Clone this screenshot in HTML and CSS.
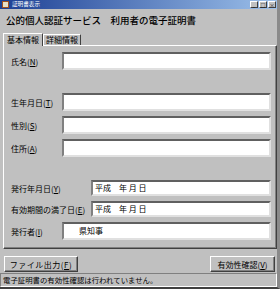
FILE: index.html
```html
<!DOCTYPE html>
<html lang="ja">
<head>
    <meta charset="UTF-8">
    <title>証明書表示</title>
    <link rel="stylesheet" href="styles.css">
</head>
<body>
    <div class="window">
        <div class="titlebar">
            <span class="app-icon"></span>
            <span class="title">証明書表示</span>
            <div class="controls">
                <span class="ctrl">_</span>
                <span class="ctrl">□</span>
                <span class="ctrl">×</span>
            </div>
        </div>
        <div class="content">
            <h1 class="heading">公的個人認証サービス　利用者の電子証明書</h1>
            <div class="tabs">
                <div class="tab active">基本情報</div>
                <div class="tab">詳細情報</div>
            </div>
            <div class="panel">
                <div class="row">
                    <label class="label">氏名(<u>N</u>)</label>
                    <div class="field"></div>
                </div>
                <div class="row gap-lg">
                    <label class="label">生年月日(<u>T</u>)</label>
                    <div class="field"></div>
                </div>
                <div class="row">
                    <label class="label">性別(<u>S</u>)</label>
                    <div class="field"></div>
                </div>
                <div class="row">
                    <label class="label">住所(<u>A</u>)</label>
                    <div class="field"></div>
                </div>
                <div class="row gap-lg wide">
                    <label class="label">発行年月日(<u>Y</u>)</label>
                    <div class="field date">平成　年 月 日</div>
                </div>
                <div class="row wide">
                    <label class="label">有効期間の満了日(<u>E</u>)</label>
                    <div class="field date">平成　年 月 日</div>
                </div>
                <div class="row">
                    <label class="label">発行者(<u>I</u>)</label>
                    <div class="field issuer">県知事</div>
                </div>
            </div>
            <div class="actions">
                <button class="btn btn-file">ファイル出力(<u>F</u>)</button>
                <button class="btn btn-verify">有効性確認(<u>V</u>)</button>
            </div>
            <div class="status">電子証明書の有効性確認は行われていません。</div>
        </div>
    </div>
</body>
</html>
```

FILE: styles.css
```css
* {
    box-sizing: border-box;
}
body {
    margin: 0;
    background-color: #c0c0c0;
    font-family: "Noto Sans CJK JP", "DejaVu Sans", sans-serif;
    color: #000;
}
.window {
    width: 280px;
    height: 289px;
    background-color: #c0c0c0;
    border-right: 3px solid #8a8a8a;
    border-bottom: 2px solid #404040;
    overflow: hidden;
}
.titlebar {
    height: 9px;
    display: flex;
    align-items: center;
    padding-left: 2px;
    background: linear-gradient(to right, #1c3f94, #9cc0ea);
}
.app-icon {
    width: 7px;
    height: 7px;
    background: #e8e0c8;
    border: 1px solid #a05020;
}
.title {
    margin-left: 3px;
    font-size: 5.6px;
    line-height: 9px;
    color: #fff;
}
.controls {
    margin-left: auto;
    display: flex;
    gap: 1px;
    padding-right: 1px;
}
.ctrl {
    width: 8px;
    height: 7px;
    background: #c0c0c0;
    border: 1px solid;
    border-color: #fff #404040 #404040 #fff;
    font-size: 5px;
    line-height: 5px;
    text-align: center;
    color: #000;
}
.content {
    padding: 0 0 0 3px;
}
.heading {
    margin: 0;
    padding: 4px 0 0 3px;
    height: 23px;
    font-size: 9.5px;
    font-weight: 500;
    line-height: 14px;
    white-space: nowrap;
}
.tabs {
    display: flex;
    align-items: flex-end;
    height: 13px;
}
.tab {
    height: 11px;
    padding: 0 2px;
    font-size: 8px;
    line-height: 10px;
    border: 1px solid;
    border-bottom: none;
    border-color: #fff #404040 #404040 #fff;
    white-space: nowrap;
}
.tab.active {
    height: 13px;
    padding: 1px 3px 0;
    position: relative;
    top: 1px;
    background: #c0c0c0;
    z-index: 1;
}
.panel {
    width: 274px;
    height: 204px;
    padding: 6px 5px 0 7px;
    border: 1px solid;
    border-color: #fff #404040 #404040 #fff;
    box-shadow: inset -1px -1px 0 #808080;
}
.row {
    display: flex;
    align-items: center;
    margin-top: 5px;
}
.row:first-child {
    margin-top: 0;
}
.row.gap-lg {
    margin-top: 23px;
}
.label {
    width: 51px;
    flex: none;
    font-size: 8px;
    white-space: nowrap;
}
.row.wide .label {
    width: 80px;
}
.field {
    flex: 1;
    height: 18px;
    background: #fff;
    border-top: 2px solid #606060;
    border-left: 2px solid #808080;
    border-right: 2px solid #e0e0e0;
    border-bottom: 2px solid #e0e0e0;
    font-size: 8px;
    line-height: 14px;
    padding-left: 2px;
    white-space: nowrap;
}
.field.date {
    height: 16px;
    line-height: 12px;
}
.field.issuer {
    padding-left: 15px;
}
.actions {
    display: flex;
    justify-content: space-between;
    padding: 7px 2px 0 1px;
    height: 24px;
}
.btn {
    height: 16px;
    padding: 0;
    font-family: inherit;
    font-size: 8px;
    background: #c0c0c0;
    border: 1px solid;
    border-color: #fff #404040 #404040 #fff;
    box-shadow: inset -1px -1px 0 #808080;
    color: #000;
}
.btn-file {
    width: 74px;
    letter-spacing: 0.5px;
}
.btn-verify {
    width: 65px;
}
.status {
    margin-left: -3px;
    height: 14px;
    padding-left: 2px;
    font-size: 7.4px;
    line-height: 12px;
    border: 1px solid;
    border-color: #808080 #fff #fff #808080;
    white-space: nowrap;
}
```
